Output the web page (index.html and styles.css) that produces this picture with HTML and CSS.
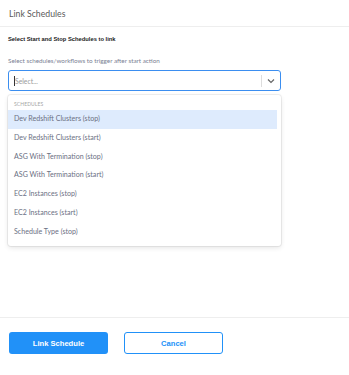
FILE: index.html
```html
<!DOCTYPE html>
<html lang="en">
<head>
    <meta charset="UTF-8">
    <meta name="viewport" content="width=device-width, initial-scale=1.0">
    <title>Link Schedules</title>
    <link rel="stylesheet" href="styles.css">
</head>
<body>
    <div class="modal">
        <header class="modal-header">
            <h1>Link Schedules</h1>
        </header>

        <main class="modal-body">
            <h2 class="section-title">Select Start and Stop Schedules to link</h2>
            <label class="field-label">Select schedules/workflows to trigger after start action</label>

            <div class="select">
                <div class="select-control">
                    <span class="select-caret"></span>
                    <span class="select-placeholder">Select...</span>
                    <span class="select-sep"></span>
                    <svg class="select-arrow" width="8" height="6" viewBox="0 0 8 6">
                        <path d="M1 1.5 L4 4.5 L7 1.5" fill="none" stroke="#666" stroke-width="1.2"/>
                    </svg>
                </div>

                <div class="select-menu">
                    <div class="menu-group">Schedules</div>
                    <div class="menu-option active">Dev Redshift Clusters (stop)</div>
                    <div class="menu-option">Dev Redshift Clusters (start)</div>
                    <div class="menu-option">ASG With Termination (stop)</div>
                    <div class="menu-option">ASG With Termination (start)</div>
                    <div class="menu-option">EC2 Instances (stop)</div>
                    <div class="menu-option">EC2 Instances (start)</div>
                    <div class="menu-option">Schedule Type (stop)</div>
                </div>
            </div>
        </main>

        <footer class="modal-footer">
            <button class="btn btn-primary">Link Schedule</button>
            <button class="btn btn-outline">Cancel</button>
        </footer>
    </div>
</body>
</html>
```

FILE: styles.css
```css
:root {
    --blue: #2191f8;
    --focus: #3b8ef0;
    --text: #4a4a4a;
    --muted: #7b8194;
    --option: #6b7083;
    --line: #eeeeee;
}
body {
    margin: 0;
    font-family: 'Lato', 'Open Sans', sans-serif;
    background: #ffffff;
    color: var(--text);
}
.modal {
    display: flex;
    flex-direction: column;
    min-height: 100vh;
}
.modal-header {
    height: 27px;
    box-sizing: border-box;
    padding: 0 9px;
    display: flex;
    align-items: center;
    border-bottom: 1px solid var(--line);
}
.modal-header h1 {
    margin: 0;
    font-size: 8.7px;
    font-weight: 400;
    color: #5a5a5a;
}
.modal-body {
    flex: 1;
    padding: 0 8px;
}
.section-title {
    margin: 8px 0 0;
    height: 8px;
    line-height: 8px;
    font-family: 'Liberation Sans', sans-serif;
    font-size: 5.8px;
    font-weight: 700;
    color: #222222;
}
.field-label {
    display: block;
    margin-top: 13px;
    line-height: 10px;
    font-size: 6.3px;
    color: var(--muted);
}
.select {
    position: relative;
    margin-top: 4px;
    width: 273px;
}
.select-control {
    height: 21px;
    box-sizing: border-box;
    border: 1px solid var(--focus);
    border-radius: 3px;
    display: flex;
    align-items: center;
    padding-left: 5px;
}
.select-caret {
    width: 1px;
    height: 10px;
    background: #333333;
}
.select-placeholder {
    flex: 1;
    font-size: 6.8px;
    color: #9a9a9a;
}
.select-sep {
    width: 1px;
    height: 12px;
    background: #dddddd;
}
.select-arrow {
    margin: 0 5px 0 5px;
}
.select-menu {
    position: absolute;
    top: 25px;
    left: 0;
    right: 0;
    background: #ffffff;
    border-radius: 3px;
    box-shadow: 0 0 0 1px rgba(0, 0, 0, 0.06), 0 2px 5px rgba(0, 0, 0, 0.1);
    padding: 4px 4px 5px 0;
}
.menu-group {
    height: 11px;
    line-height: 11px;
    padding-left: 6px;
    font-size: 5px;
    text-transform: uppercase;
    color: #a5a5a5;
    letter-spacing: 0.1px;
}
.menu-option {
    height: 18.75px;
    line-height: 18.75px;
    padding-left: 6px;
    font-size: 7.1px;
    color: var(--option);
}
.menu-option.active {
    background: #deebfd;
}
.modal-footer {
    border-top: 1px solid var(--line);
    padding: 14px 9px 21px;
    display: flex;
    gap: 16px;
}
.btn {
    width: 99px;
    height: 22px;
    border-radius: 3px;
    font-family: 'Liberation Sans', sans-serif;
    font-size: 7.6px;
    font-weight: 700;
    cursor: pointer;
}
.btn-primary {
    background: var(--blue);
    border: none;
    color: #ffffff;
}
.btn-outline {
    background: #ffffff;
    border: 1px solid var(--blue);
    color: var(--blue);
}
```
